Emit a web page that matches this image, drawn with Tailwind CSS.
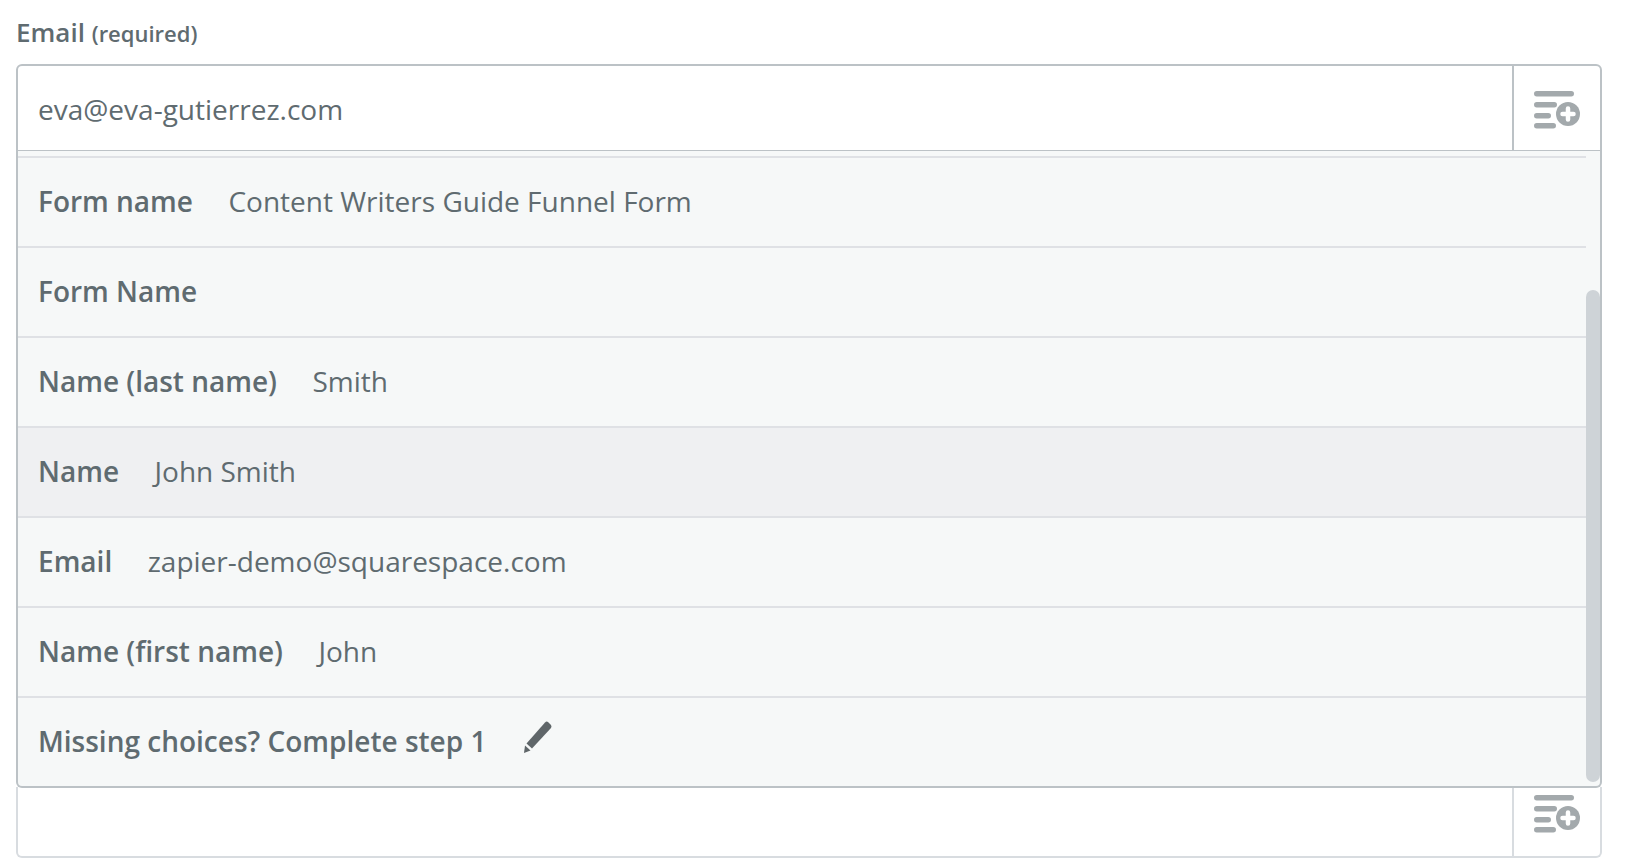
<!DOCTYPE html>
<html lang="en">

<head>
    <meta charset="UTF-8">
    <title>Email field</title>
    <script src="https://cdn.jsdelivr.net/npm/@tailwindcss/browser@4"></script>
</head>

<body class="bg-white overflow-hidden font-['Open_Sans',sans-serif] text-[#5f6b70]">
    <main class="w-[1626px] h-[860px] pl-4 pr-6 pt-[15px]">
        <label class="block h-[49px] text-[26px] leading-[34px] font-semibold">Email <span class="text-[22px] font-semibold">(required)</span></label>

        <!-- input -->
        <div class="flex h-[88px] bg-white border-2 border-[#bcc2c6] rounded-t-md">
            <div class="flex-1 pl-[20px] text-[28px] leading-[86px]">eva@eva-gutierrez.com</div>
            <div class="w-[88px] flex items-center justify-center border-l-2 border-[#bcc2c6]">
                <svg width="48" height="44" viewBox="0 0 48 44" fill="#a3a9ac" class="mt-[6px] mr-[2px]">
                    <rect x="2" y="2" width="40" height="5.5" rx="2.75" />
                    <rect x="2" y="13" width="23" height="5.5" rx="2.75" />
                    <rect x="2" y="24" width="17" height="5.5" rx="2.75" />
                    <rect x="2" y="34" width="22" height="5.5" rx="2.75" />
                    <circle cx="36" cy="25" r="12" />
                    <path d="M30.5 25h11M36 19.5v11" stroke="#fff" stroke-width="4.5" stroke-linecap="round" />
                </svg>
            </div>
        </div>

        <!-- dropdown -->
        <div class="relative h-[637px] -mt-px bg-[#f6f8f8] border-2 border-t-0 border-[#bcc2c6] rounded-b-md text-[28px]">
            <ul class="w-[1568px] pt-[5px]">
                <li class="h-[92px] flex items-center gap-[35.5px] pl-[20px] pb-[2px] border-y-2 border-[#dfe1e5]"><b class="font-semibold">Form name</b><span>Content Writers Guide Funnel Form</span></li>
                <li class="h-[90px] flex items-center gap-[35.5px] pl-[20px] pb-[2px] border-b-2 border-[#dfe1e5]"><b class="font-semibold">Form Name</b></li>
                <li class="h-[90px] flex items-center gap-[35.5px] pl-[20px] pb-[2px] border-b-2 border-[#dfe1e5]"><b class="font-semibold">Name (last name)</b><span>Smith</span></li>
                <li class="h-[90px] flex items-center gap-[35.5px] pl-[20px] pb-[2px] border-b-2 border-[#dfe1e5] bg-[#eff0f2]"><b class="font-semibold">Name</b><span>John Smith</span></li>
                <li class="h-[90px] flex items-center gap-[35.5px] pl-[20px] pb-[2px] border-b-2 border-[#dfe1e5]"><b class="font-semibold">Email</b><span>zapier-demo@squarespace.com</span></li>
                <li class="h-[90px] flex items-center gap-[35.5px] pl-[20px] pb-[2px] border-b-2 border-[#dfe1e5]"><b class="font-semibold">Name (first name)</b><span>John</span></li>
                <li class="h-[88px] flex items-center gap-[35.5px] pl-[20px] pb-[2px]"><b class="font-semibold">Missing choices? Complete step 1</b>
                    <svg width="28" height="33" viewBox="0 0 28 33" fill="#5f6669" class="-mt-[8px] ml-[2px]">
                        <path d="M21 1.5Q22.5 0 24 1L27 4Q28 5.5 27 7L8 27.5 2.5 22.5Z" />
                        <path d="M1 24.5 6.5 29.5 0 32Z" />
                    </svg>
                </li>
            </ul>
            <!-- scrollbar -->
            <div class="absolute right-0 top-[139px] bottom-[4px] w-[14px] rounded-full bg-[#ced3d7]"></div>
        </div>

        <!-- next field -->
        <div class="flex h-[71px] -mt-px bg-white border-2 border-t-0 border-[#d8dce0] rounded-b-md">
            <div class="flex-1"></div>
            <div class="w-[88px] flex items-center justify-center border-l-2 border-[#d8dce0]">
                <svg width="48" height="44" viewBox="0 0 48 44" fill="#a3a9ac" class="-mt-[14px] mr-[2px]">
                    <rect x="2" y="2" width="40" height="5.5" rx="2.75" />
                    <rect x="2" y="13" width="23" height="5.5" rx="2.75" />
                    <rect x="2" y="24" width="17" height="5.5" rx="2.75" />
                    <rect x="2" y="34" width="22" height="5.5" rx="2.75" />
                    <circle cx="36" cy="25" r="12" />
                    <path d="M30.5 25h11M36 19.5v11" stroke="#fff" stroke-width="4.5" stroke-linecap="round" />
                </svg>
            </div>
        </div>
    </main>
</body>

</html>
